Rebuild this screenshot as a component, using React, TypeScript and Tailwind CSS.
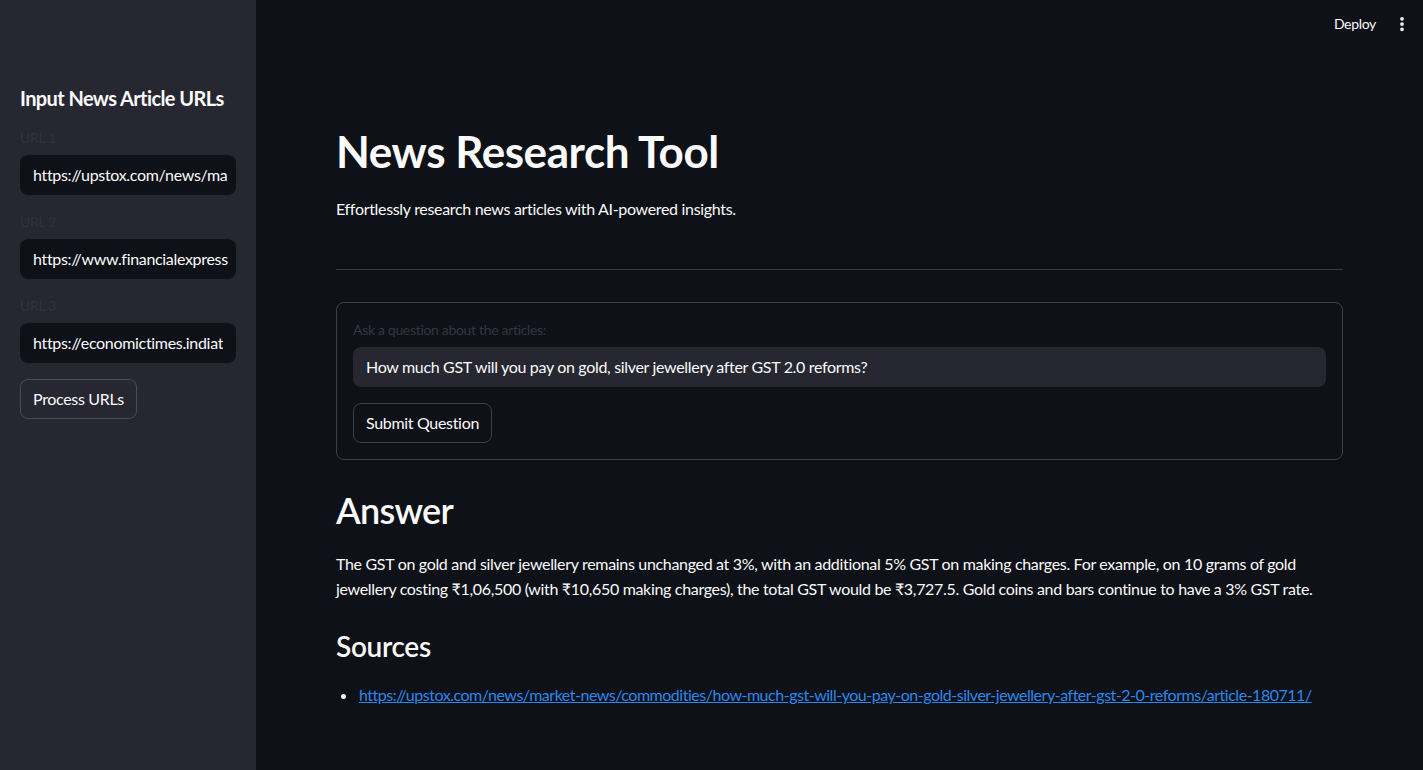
import { EllipsisVertical } from 'lucide-react';

const font = { fontFamily: '"Source Sans Pro", Lato, "Noto Sans", sans-serif' };

function SidebarInput({ label, value }: { label: string; value: string }) {
  return (
    <div className="flex flex-col">
      <label className="text-sm text-[#30323c] h-[17px] leading-[17px] mb-[9px]">{label}</label>
      <div className="h-10 rounded-lg bg-[#0e1117] flex items-center pl-[13px] pr-2 overflow-hidden whitespace-nowrap text-base text-[#fafafa]">
        <span className="overflow-hidden">{value}</span>
      </div>
    </div>
  );
}

export default function App() {
  return (
    <div className="flex w-full h-[770px] bg-[#0e1117] text-[#fafafa] overflow-hidden tracking-[-0.02em]" style={font}>
      {/* Sidebar */}
      <aside className="w-[256px] shrink-0 bg-[#262730] px-5 pt-[85px]">
        <h3 className="text-xl font-bold leading-[26px] mb-[18px] whitespace-nowrap tracking-[-0.03em]">Input News Article URLs</h3>
        <div className="flex flex-col gap-[18px]">
          <SidebarInput label="URL 1" value="https://upstox.com/news/ma" />
          <SidebarInput label="URL 2" value="https://www.financialexpress" />
          <SidebarInput label="URL 3" value="https://economictimes.indiat" />
        </div>
        <button className="mt-4 h-10 px-3 rounded-lg border border-[#4a4b55] bg-[#262730] text-base text-[#fafafa]">
          Process URLs
        </button>
      </aside>

      {/* Main */}
      <main className="flex-1 flex flex-col">
        <header className="h-12 flex items-center justify-end gap-[17px] pr-3 shrink-0">
          <button className="text-sm text-[#fafafa]">Deploy</button>
          <EllipsisVertical size={18} strokeWidth={3} className="text-[#fafafa]" />
        </header>

        <div className="px-20 pt-[74px]">
          <h1 className="text-[44px] font-bold leading-[58px] tracking-[-0.01em]">News Research Tool</h1>
          <p className="mt-4 text-base leading-[26px]">Effortlessly research news articles with AI-powered insights.</p>

          <hr className="mt-[47px] border-t border-[#3a3c45]" />

          <div className="mt-8 border border-[#3e3f47] rounded-lg px-4 pt-[17px] pb-4">
            <label className="block text-sm text-[#34363f] leading-[20px] mb-[7px]">Ask a question about the articles:</label>
            <div className="h-10 rounded-lg bg-[#262730] flex items-center pl-[13px] text-base">
              How much GST will you pay on gold, silver jewellery after GST 2.0 reforms?
            </div>
            <button className="mt-4 h-10 px-3 rounded-lg border border-[#3e3f47] bg-[#0e1117] text-base">
              Submit Question
            </button>
          </div>

          <h2 className="mt-[28px] text-[36px] font-semibold leading-[44px] tracking-[-0.02em]">Answer</h2>
          <p className="mt-[19px] text-base leading-[25px]">
            The GST on gold and silver jewellery remains unchanged at 3%, with an additional 5% GST on making charges. For example, on 10 grams of gold jewellery costing ₹1,06,500 (with ₹10,650 making charges), the total GST would be ₹3,727.5. Gold coins and bars continue to have a 3% GST rate.
          </p>

          <h3 className="mt-[27px] text-[28px] font-semibold leading-[36px]">Sources</h3>
          <ul className="mt-[19px] list-disc pl-[22px]">
            <li className="text-base leading-[24px] pl-px">
              <a href="#" className="text-[#2a88ee] underline tracking-[-0.03em]">
                https://upstox.com/news/market-news/commodities/how-much-gst-will-you-pay-on-gold-silver-jewellery-after-gst-2-0-reforms/article-180711/
              </a>
            </li>
          </ul>
        </div>
      </main>
    </div>
  );
}
